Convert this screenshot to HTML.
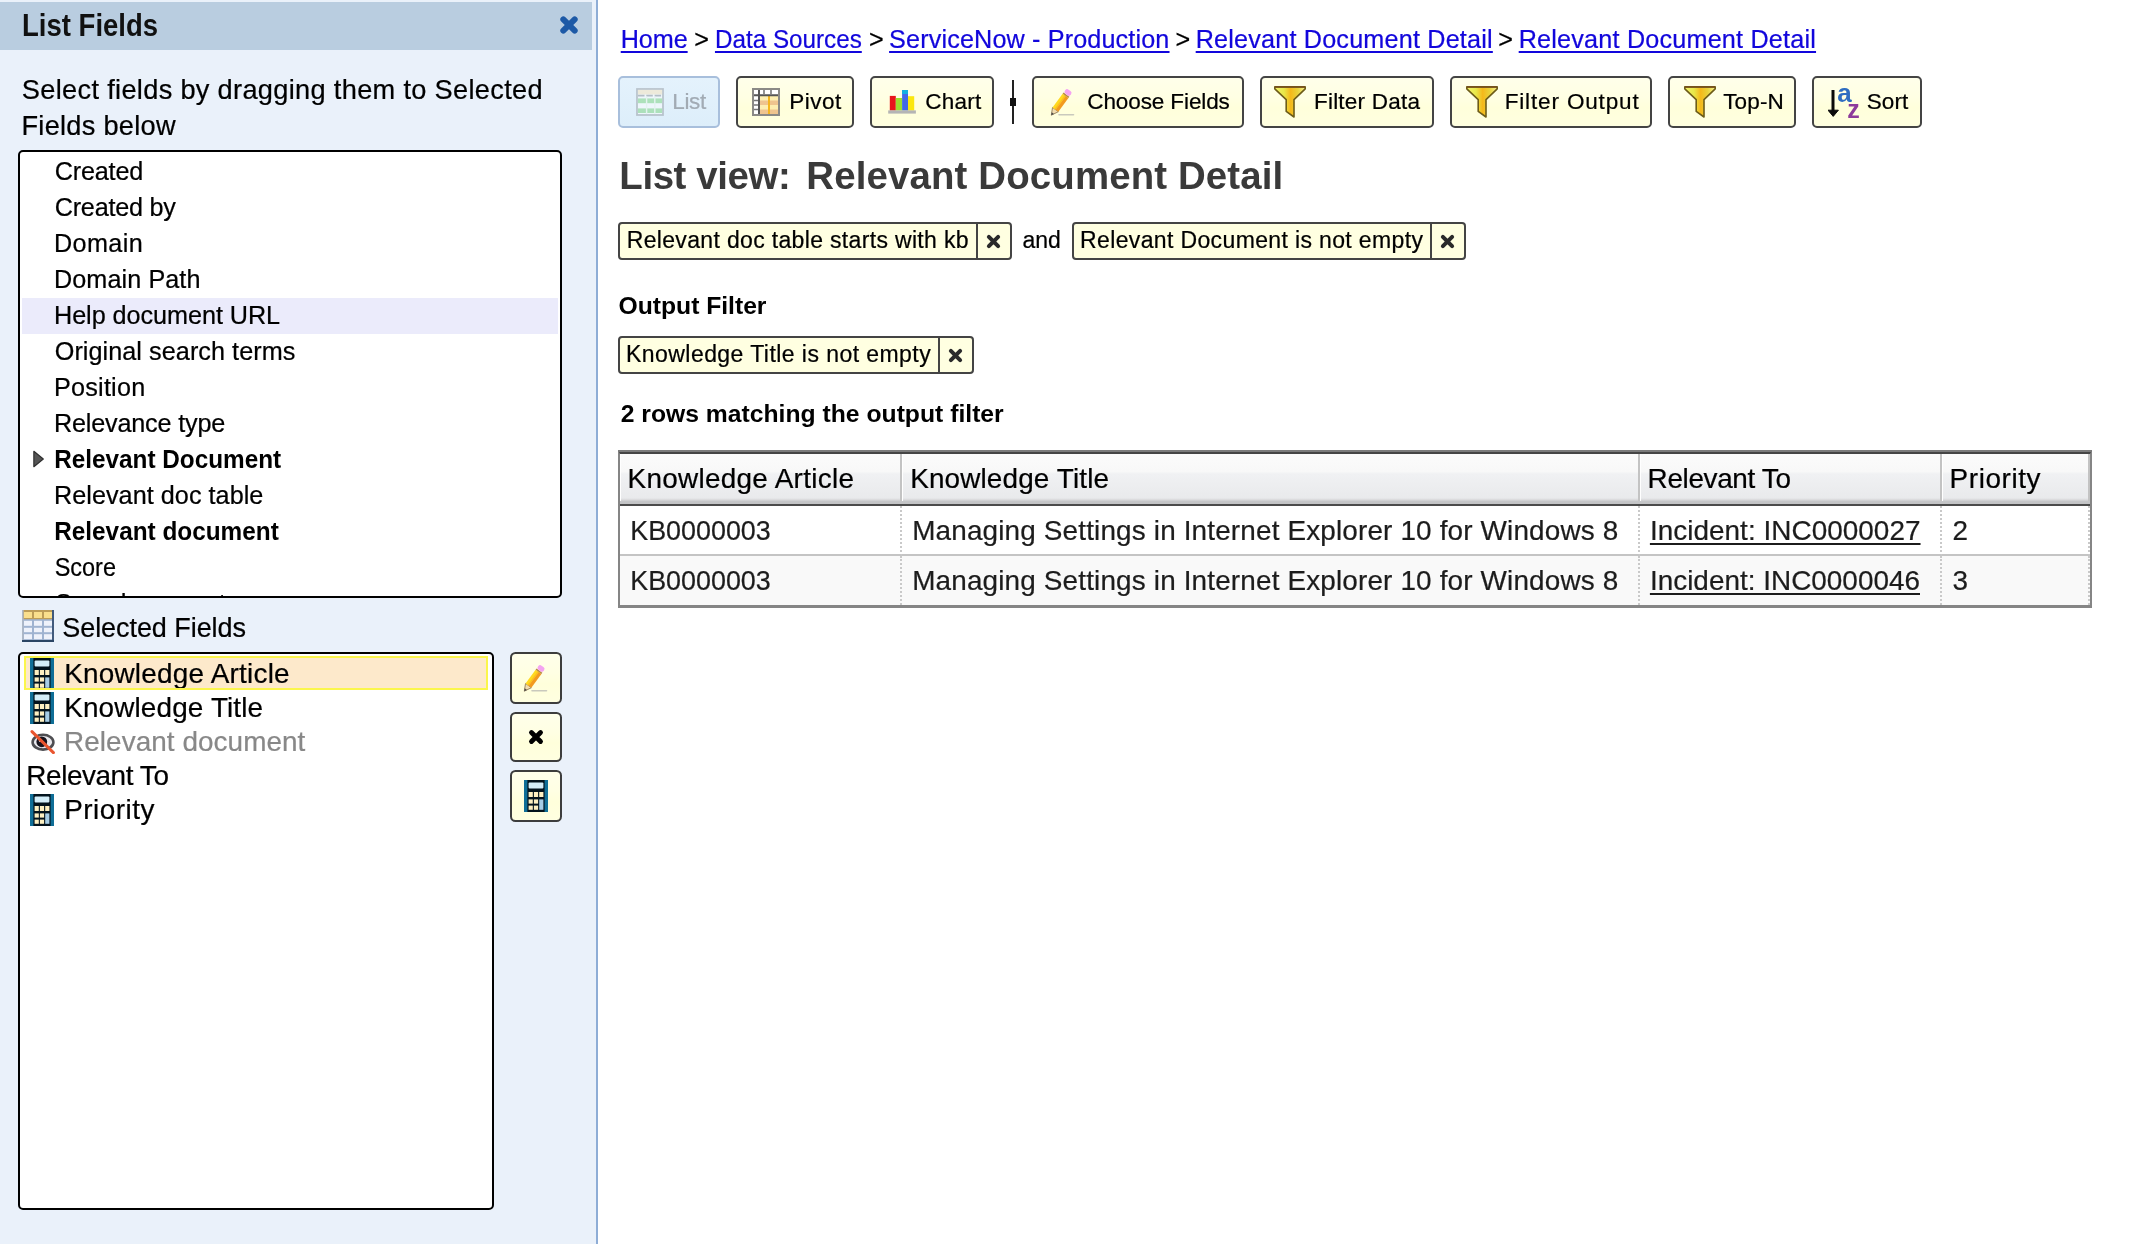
<!DOCTYPE html>
<html lang="en">
<head>
<meta charset="utf-8">
<title>List view: Relevant Document Detail</title>
<style>
html,body{margin:0;padding:0;}
body{width:2148px;height:1244px;overflow:hidden;background:#fff;position:relative;
  font-family:"Liberation Sans","DejaVu Sans",sans-serif;color:#000;font-size:25.2px;-webkit-text-stroke:0.22px;}
b,.b{font-family:"Liberation Sans","DejaVu Sans",sans-serif;font-weight:bold;-webkit-text-stroke:0;}
.abs{position:absolute;white-space:nowrap;}
/* ---------- left panel ---------- */
#left{will-change:transform;position:absolute;left:0;top:0;width:596px;height:1244px;background:#eaf1fa;border-right:2px solid #8eadd6;}
#lhead{position:absolute;left:0;top:2px;width:592px;height:48px;background:#b9cde0;}
#lhead h2{position:absolute;left:23px;top:-1px;margin:0;line-height:48px;font-size:31.8px;color:#111;white-space:nowrap;}
#lhead svg{position:absolute;left:559px;top:13px;}
#hint{position:absolute;left:22px;top:72px;width:570px;margin:0;line-height:36px;font-size:27.2px;white-space:nowrap;}
#avail{position:absolute;left:18px;top:150px;width:540px;height:444px;border:2px solid #000;border-radius:5px;background:#fff;overflow:hidden;}
#avail ul{list-style:none;margin:2px;padding:0;}
#avail li{height:36px;line-height:36px;padding-left:33px;position:relative;white-space:nowrap;}
#avail li.hl{background:#ebebfb;}
#avail li span,#avail li b{position:relative;top:-1px;}
#avail li svg{position:absolute;left:11px;top:7px;width:12px;height:20px;}
#selhead{position:absolute;left:22px;top:610px;height:32px;}
#selhead svg{position:absolute;left:0;top:0;}
#selhead span{position:absolute;left:41px;top:0;line-height:36px;white-space:nowrap;font-size:27px;}
#sel{position:absolute;left:18px;top:652px;width:472px;height:554px;border:2px solid #000;border-radius:5px;background:#fff;overflow:hidden;}
#sel ul{list-style:none;margin:2px;padding:0;}
#sel li{height:34px;line-height:34px;position:relative;white-space:nowrap;font-size:27.9px;padding-left:43px;margin:0 2px;}
#sel li.noic{padding-left:5px;}
#sel li.cur{background:#fde9cb;}
#sel li.hid{color:#888;}
#sel li svg{position:absolute;left:6px;top:2px;}
#sel li.hid svg{left:5.5px;top:5.5px;}
#sel li{overflow:hidden;}
#sel li.cur:after{content:"";position:absolute;left:0;top:0;right:0;bottom:0;border:2px solid #fbf64c;}
#sel li span{position:relative;top:1.4px;}
.sbtn{position:absolute;left:510px;width:48px;border:2px solid #3d3d3d;border-radius:5.5px;background:linear-gradient(#ffffea 0,#ffffe3 40%,#ffffdb 62%,#ffffe0 100%);}
.sbtn svg{position:absolute;left:50%;top:50%;transform:translate(-50%,-50%);}
/* ---------- main ---------- */
#main{will-change:transform;position:absolute;left:598px;top:0;width:1550px;height:1244px;background:#fff;}
#crumbs{position:absolute;left:0;top:21px;line-height:36px;white-space:nowrap;}
#crumbs a,#crumbs span{position:absolute;top:0;}
#crumbs a{color:#1206dc;text-decoration:underline;text-decoration-thickness:2px;text-underline-offset:3px;}
.tb{position:absolute;top:76px;height:48px;border:2px solid #444;border-radius:5px;background:linear-gradient(#ffffea 0,#ffffe3 40%,#ffffdb 62%,#ffffe0 100%);font-size:22.5px;}
.tb svg{position:absolute;top:8px;left:14px;}
.tb span{position:absolute;top:0;line-height:48px;white-space:nowrap;}
.tb.dis{background:#e0f0fb linear-gradient(#e4f2fc,#ddeefa);border-color:#a8bfdc;color:#a2abb4;}
#sep{position:absolute;left:414px;top:80px;width:2px;height:44px;background:#222;}
#sep:after{content:"";position:absolute;left:-2px;top:18px;width:6px;height:8px;background:#111;}
h1{position:absolute;left:23px;top:150px;margin:0;font-size:38.4px;line-height:52px;color:#3a3a3a;white-space:nowrap;}
.pill{position:absolute;height:34px;border:2px solid #444;border-radius:4px;background:#ffffe1;font-size:23px;}
.pill span{position:absolute;left:7px;top:-1.5px;line-height:34px;white-space:nowrap;}
.pill i{position:absolute;right:0;top:0;width:32px;height:34px;border-left:2px solid #444;}
.pill i svg{position:absolute;left:8px;top:9.8px;}
.h3{position:absolute;font-size:24.7px;line-height:36px;white-space:nowrap;}
#grid{position:absolute;left:20px;top:450px;width:1470px;height:151px;border-style:solid;border-color:#454545 #858585 #858585 #858585;border-width:4px 2px 3px 2px;}
#grid:before{content:"";position:absolute;left:-2px;right:-2px;top:-4px;height:2px;background:#7b7b7b;}
#grid table{border-collapse:separate;border-spacing:0;table-layout:fixed;width:1470px;font-size:27.9px;color:#1c1c1c;}
#grid th,#grid td{padding:0;text-align:left;font-weight:normal;white-space:nowrap;overflow:hidden;box-sizing:border-box;}
#grid th{height:52px;color:#000;border-bottom:2px solid #4b4b4b;background:linear-gradient(#c3c3c3,#c3c3c3) right top/2px 47px no-repeat,linear-gradient(#fff,#fff) left top/1px 47px no-repeat,linear-gradient(#fbfbfb 0,#f8f8f8 35%,#f0f1f3 40%,#e9eaec 88%,#dcdcde 91%,#c5c6c8 95%,#c2c3c5 100%);}

#grid th span{position:relative;top:0px;left:8.6px;}
#grid td{height:50px;border-right:2px dotted #c9c9c9;border-bottom:2px solid #c4c4c4;background:#fff;}
#grid tr.alt td{height:49px;border-bottom:0;background:#f9f9f9;}
#grid td span,#grid td a{position:relative;left:11.4px;top:0.5px;}
#grid td a{color:#1c1c1c;text-decoration:underline;text-decoration-thickness:2px;text-underline-offset:3px;}
</style>
<style id="fit">
#t1{display:inline-block;transform:translateX(-0.99px) scaleX(0.8655);transform-origin:0 50%;}
#t2{letter-spacing:0.316px;margin-left:-0.17px;}
#t3{letter-spacing:0.269px;margin-left:-0.56px;}
#a1{letter-spacing:-0.190px;margin-left:-0.24px;}
#a2{letter-spacing:-0.241px;margin-left:-0.24px;}
#a3{letter-spacing:0.374px;margin-left:-1.02px;}
#a4{letter-spacing:0.087px;margin-left:-1.02px;}
#a5{letter-spacing:-0.043px;margin-left:-1.01px;}
#a6{letter-spacing:0.061px;margin-left:-0.26px;}
#a7{letter-spacing:0.224px;margin-left:-1.02px;}
#a8{letter-spacing:-0.183px;margin-left:-1.02px;}
#a9{display:inline-block;transform:translateX(-0.87px) scaleX(0.9657);transform-origin:0 50%;}
#a10{letter-spacing:0.044px;margin-left:-1.02px;}
#a11{display:inline-block;transform:translateX(-0.87px) scaleX(0.9671);transform-origin:0 50%;}
#a12{display:inline-block;transform:translateX(-0.33px) scaleX(0.9315);transform-origin:0 50%;}
#t4{letter-spacing:-0.061px;margin-left:-0.78px;}
#s1{letter-spacing:0.233px;margin-left:-2.85px;}
#s2{letter-spacing:0.147px;margin-left:-2.85px;}
#s3{letter-spacing:0.062px;margin-left:-2.95px;}
#s4{letter-spacing:-0.418px;margin-left:-2.69px;}
#s5{letter-spacing:0.514px;margin-left:-2.85px;}
#c1{letter-spacing:-0.068px;margin-left:-0.29px;}
#c2{display:inline-block;transform:translateX(-1.05px) scaleX(0.9622);transform-origin:0 50%;}
#c3{letter-spacing:0.141px;margin-left:-0.51px;}
#c4{letter-spacing:0.189px;margin-left:-0.32px;}
#c5{letter-spacing:0.198px;margin-left:-0.32px;}
#q1{letter-spacing:0.000px;margin-left:-0.70px;}
#q2{letter-spacing:0.000px;margin-left:-1.11px;}
#q3{letter-spacing:0.000px;margin-left:-0.50px;}
#q4{letter-spacing:0.000px;margin-left:-0.73px;}
#b1{letter-spacing:-0.368px;margin-left:-0.68px;}
#b2{letter-spacing:0.496px;margin-left:-0.78px;}
#b3{letter-spacing:0.210px;margin-left:0.30px;}
#b4{letter-spacing:-0.106px;margin-left:0.30px;}
#b5{letter-spacing:0.229px;margin-left:-0.07px;}
#b6{letter-spacing:0.857px;margin-left:-0.37px;}
#b7{letter-spacing:0.159px;margin-left:1.20px;}
#b8{letter-spacing:0.042px;margin-left:-0.23px;}
#h1a{letter-spacing:-0.398px;margin-left:-1.66px;}
#h1b{letter-spacing:0.144px;margin-left:-1.66px;}
#p1{letter-spacing:0.336px;margin-left:-0.30px;}
#p2{letter-spacing:0.058px;margin-left:0.42px;}
#p3{letter-spacing:0.360px;margin-left:-0.92px;}
#p4{letter-spacing:0.439px;margin-left:-0.95px;}
#t5{letter-spacing:-0.022px;margin-left:0.62px;}
#t6{letter-spacing:0.011px;margin-left:0.69px;}
#g1{letter-spacing:0.291px;margin-left:-1.07px;}
#g2{letter-spacing:0.144px;margin-left:-0.46px;}
#g3{letter-spacing:-0.343px;margin-left:-0.99px;}
#g4{letter-spacing:0.580px;margin-left:-0.99px;}
#r1a{display:inline-block;transform:translateX(-0.75px) scaleX(0.9638);transform-origin:0 50%;}
#r1b{letter-spacing:0.156px;margin-left:-1.19px;}
#r1c{letter-spacing:0.042px;margin-left:-1.50px;}
#r1d{letter-spacing:0.000px;margin-left:-1.01px;}
#r2a{display:inline-block;transform:translateX(-0.75px) scaleX(0.9637);transform-origin:0 50%;}
#r2b{letter-spacing:0.156px;margin-left:-1.19px;}
#r2c{letter-spacing:0.015px;margin-left:-1.50px;}
#r2d{letter-spacing:0.000px;margin-left:-0.99px;}
</style>
</head>
<body>
<div id="left">
  <div id="lhead"><svg width="20" height="20" viewBox="0 0 20 20"><path d="M4.32 4.32L15.68 15.68M15.68 4.32L4.32 15.68" stroke="#1d59a6" stroke-width="6" stroke-linecap="round" fill="none"/></svg><h2 class="b"><span id="t1">List Fields</span></h2></div>
  <p id="hint"><span id="t2">Select fields by dragging them to Selected</span><br><span id="t3">Fields below</span></p>
  <div id="avail"><ul>
    <li><span id="a1">Created</span></li>
    <li><span id="a2">Created by</span></li>
    <li><span id="a3">Domain</span></li>
    <li><span id="a4">Domain Path</span></li>
    <li class="hl"><span id="a5">Help document URL</span></li>
    <li><span id="a6">Original search terms</span></li>
    <li><span id="a7">Position</span></li>
    <li><span id="a8">Relevance type</span></li>
    <li><svg width="14" height="20" viewBox="0 0 14 20"><path d="M1 1L12 10L1 19Z" fill="#555" stroke="#2e2e2e" stroke-width="1.4" stroke-linejoin="round"/></svg><b id="a9">Relevant Document</b></li>
    <li><span id="a10">Relevant doc table</span></li>
    <li><b id="a11">Relevant document</b></li>
    <li><span id="a12">Score</span></li>
    <li><span id="a13">Search request</span></li>
  </ul></div>
  <div id="selhead"><svg width="32" height="32" viewBox="0 0 16 16"><rect width="16" height="16" fill="#9fb3d1"/><rect width="16" height="4.6" fill="#bd9d58"/><g fill="#fadf8c"><rect x="1" y="1" width="4" height="3"/><rect x="6" y="1" width="4" height="3"/><rect x="11" y="1" width="4" height="3"/></g><g fill="#eef2fb"><rect x="1" y="5.4" width="4" height="2.5"/><rect x="6" y="5.4" width="4" height="2.5"/><rect x="11" y="5.4" width="4" height="2.5"/><rect x="1" y="8.9" width="4" height="2.2"/><rect x="6" y="8.9" width="4" height="2.2"/><rect x="11" y="8.9" width="4" height="2.2"/><rect x="1" y="12.1" width="4" height="2.5"/><rect x="6" y="12.1" width="4" height="2.5"/><rect x="11" y="12.1" width="4" height="2.5"/></g><rect x="0" width="0.8" height="16" fill="#aeb8c6"/><rect x="15" width="1" height="16" fill="#415a7c"/><rect y="15" width="16" height="1" fill="#2b4564"/></svg><span id="t4">Selected Fields</span></div>
  <div id="sel"><ul>
    <li class="cur"><svg width="24" height="32" viewBox="0 0 24 32"><rect width="24" height="32" fill="#0f6e97"/><rect x="3.4" width="17.2" height="32" fill="#03131d"/><rect x="4.6" y="2.4" width="14.8" height="6" rx="1" fill="#d4eef9"/><g fill="#fdf0c2"><rect x="4.6" y="12" width="4.2" height="5"/><rect x="9.9" y="12" width="4.2" height="5"/><rect x="15.2" y="12" width="4.2" height="5"/><rect x="4.6" y="19.4" width="4.2" height="4.2"/><rect x="9.9" y="19.4" width="4.2" height="4.2"/><rect x="4.6" y="25.6" width="4.2" height="4.2"/><rect x="9.9" y="25.6" width="4.2" height="4.2"/></g><rect x="15.2" y="19.4" width="4.2" height="10.4" fill="#a6cde6"/></svg><span id="s1">Knowledge Article</span></li>
    <li><svg width="24" height="32" viewBox="0 0 24 32"><rect width="24" height="32" fill="#0f6e97"/><rect x="3.4" width="17.2" height="32" fill="#03131d"/><rect x="4.6" y="2.4" width="14.8" height="6" rx="1" fill="#d4eef9"/><g fill="#fdf0c2"><rect x="4.6" y="12" width="4.2" height="5"/><rect x="9.9" y="12" width="4.2" height="5"/><rect x="15.2" y="12" width="4.2" height="5"/><rect x="4.6" y="19.4" width="4.2" height="4.2"/><rect x="9.9" y="19.4" width="4.2" height="4.2"/><rect x="4.6" y="25.6" width="4.2" height="4.2"/><rect x="9.9" y="25.6" width="4.2" height="4.2"/></g><rect x="15.2" y="19.4" width="4.2" height="10.4" fill="#a6cde6"/></svg><span id="s2">Knowledge Title</span></li>
    <li class="hid"><svg width="26" height="24" viewBox="0 0 26 24"><ellipse cx="13" cy="12.2" rx="10.4" ry="7.4" fill="#e9e9ee" stroke="#4e4e52" stroke-width="2.6"/><circle cx="11.8" cy="11.8" r="5.4" fill="#17131d"/><circle cx="10.4" cy="10.6" r="1.5" fill="#fff"/><path d="M2 1.6L23.4 22.6" stroke="#e9552f" stroke-width="3" stroke-linecap="round"/></svg><span id="s3">Relevant document</span></li>
    <li class="noic"><span id="s4">Relevant To</span></li>
    <li><svg width="24" height="32" viewBox="0 0 24 32"><rect width="24" height="32" fill="#0f6e97"/><rect x="3.4" width="17.2" height="32" fill="#03131d"/><rect x="4.6" y="2.4" width="14.8" height="6" rx="1" fill="#d4eef9"/><g fill="#fdf0c2"><rect x="4.6" y="12" width="4.2" height="5"/><rect x="9.9" y="12" width="4.2" height="5"/><rect x="15.2" y="12" width="4.2" height="5"/><rect x="4.6" y="19.4" width="4.2" height="4.2"/><rect x="9.9" y="19.4" width="4.2" height="4.2"/><rect x="4.6" y="25.6" width="4.2" height="4.2"/><rect x="9.9" y="25.6" width="4.2" height="4.2"/></g><rect x="15.2" y="19.4" width="4.2" height="10.4" fill="#a6cde6"/></svg><span id="s5">Priority</span></li>
  </ul></div>
  <div class="sbtn" style="top:652px;height:48px"><svg width="32" height="32" viewBox="0 0 32 32"><path d="M12 28.8H26.5" stroke="#c9c9bd" stroke-width="1.6" stroke-linecap="round"/><g transform="translate(4.3 29.2) rotate(-53.7)"><path d="M0 0L7 -3.6V3.6Z" fill="#f2dcae" stroke="#8f7a58" stroke-width=".8"/><path d="M0 0L2.6 -1.35V1.35Z" fill="#4a4a4a"/><rect x="7" y="-3.6" width="17" height="3.6" fill="#ffd91f"/><rect x="7" y="0" width="17" height="3.6" fill="#f29a1f"/><rect x="7" y="-1.1" width="17" height="1.6" fill="#fbbf1f"/><rect x="24" y="-3.6" width="1.6" height="7.2" fill="#b78a45"/><rect x="25.6" y="-3.6" width="5.2" height="7.2" rx="2.4" fill="#f4a4f1"/></g></svg></div>
  <div class="sbtn" style="top:712px;height:46px"><svg width="16" height="16" viewBox="0 0 16 16"><path d="M3.456 3.456L12.544 12.544M12.544 3.456L3.456 12.544" stroke="#000" stroke-width="4.8" stroke-linecap="round" fill="none"/></svg></div>
  <div class="sbtn" style="top:770px;height:48px"><svg width="24" height="32" viewBox="0 0 24 32"><rect width="24" height="32" fill="#0f6e97"/><rect x="3.4" width="17.2" height="32" fill="#03131d"/><rect x="4.6" y="2.4" width="14.8" height="6" rx="1" fill="#d4eef9"/><g fill="#fdf0c2"><rect x="4.6" y="12" width="4.2" height="5"/><rect x="9.9" y="12" width="4.2" height="5"/><rect x="15.2" y="12" width="4.2" height="5"/><rect x="4.6" y="19.4" width="4.2" height="4.2"/><rect x="9.9" y="19.4" width="4.2" height="4.2"/><rect x="4.6" y="25.6" width="4.2" height="4.2"/><rect x="9.9" y="25.6" width="4.2" height="4.2"/></g><rect x="15.2" y="19.4" width="4.2" height="10.4" fill="#a6cde6"/></svg></div>
</div>
<div id="main">
  <div id="crumbs"><a id="c1" style="left:23px">Home</a><span id="q1" style="left:97px">&gt;</span><a id="c2" style="left:118px">Data Sources</a><span id="q2" style="left:272px">&gt;</span><a id="c3" style="left:291.6px">ServiceNow - Production</a><span id="q3" style="left:578px">&gt;</span><a id="c4" style="left:598px">Relevant Document Detail</a><span id="q4" style="left:901px">&gt;</span><a id="c5" style="left:921px">Relevant Document Detail</a></div>
  <div class="tb dis" style="left:20px;width:98px"><svg width="32" height="32" viewBox="0 0 32 32" opacity=".45"><rect x="3" y="3" width="26" height="26" fill="#fff" stroke="#8a8f96" stroke-width="1.8"/><rect x="3.9" y="3.9" width="24.2" height="4.6" fill="#fbe3b4"/><path d="M4 9.6H28" stroke="#7d8288" stroke-width="1.8" stroke-dasharray="6.5 1.8"/><rect x="3.9" y="12.4" width="24.2" height="4.8" fill="#6fd06f"/><rect x="3.9" y="22.4" width="24.2" height="4.6" fill="#6fd06f"/><path d="M12.6 10.6V28M20.8 10.6V28" stroke="#e9f8e6" stroke-width="1.4"/></svg><span id="b1" style="left:53px">List</span></div>
  <div class="tb" style="left:138px;width:114px"><svg style="left:12px" width="32" height="32" viewBox="0 0 32 32"><rect x="2" y="2" width="28" height="28" fill="#8b8a86"/><rect x="4" y="4" width="24" height="24" fill="#fff"/><rect x="10" y="10" width="18" height="18" fill="#fdeeb0"/><rect x="10" y="14.5" width="18" height="4.5" fill="#efc48e"/><rect x="10" y="23.5" width="18" height="4.5" fill="#efc48e"/><path d="M19 10V28" stroke="#f5b61e" stroke-width="2"/><path d="M9 4V28M4 9.2H28" stroke="#555" stroke-width="2"/><path d="M4 14.5H8M4 19H8M4 23.5H8M14 4V8M21 4V8" stroke="#777" stroke-width="1.6"/></svg><span id="b2" style="left:52px">Pivot</span></div>
  <div class="tb" style="left:272px;width:120px"><svg style="left:12px" width="32" height="32" viewBox="0 0 32 32"><rect x="5.8" y="9.9" width="6" height="14.6" fill="#e8151b"/><rect x="11.8" y="12" width="6.3" height="12.5" fill="#9bdf2f"/><rect x="18.1" y="4" width="5.9" height="20.5" fill="#4169e8"/><rect x="18.1" y="4" width="5.9" height="4" fill="#12b0e2"/><rect x="24" y="10.2" width="6.2" height="14.3" fill="#fbe70f"/><rect x="4.2" y="24.4" width="27.7" height="3.2" fill="#b5b5b5"/></svg><span id="b3" style="left:53px">Chart</span></div>
  <div id="sep"></div>
  <div class="tb" style="left:434px;width:208px"><svg style="left:13.3px" width="32" height="32" viewBox="0 0 32 32"><path d="M12 28.8H26.5" stroke="#c9c9bd" stroke-width="1.6" stroke-linecap="round"/><g transform="translate(4.3 29.2) rotate(-53.7)"><path d="M0 0L7 -3.6V3.6Z" fill="#f2dcae" stroke="#8f7a58" stroke-width=".8"/><path d="M0 0L2.6 -1.35V1.35Z" fill="#4a4a4a"/><rect x="7" y="-3.6" width="17" height="3.6" fill="#ffd91f"/><rect x="7" y="0" width="17" height="3.6" fill="#f29a1f"/><rect x="7" y="-1.1" width="17" height="1.6" fill="#fbbf1f"/><rect x="24" y="-3.6" width="1.6" height="7.2" fill="#b78a45"/><rect x="25.6" y="-3.6" width="5.2" height="7.2" rx="2.4" fill="#f4a4f1"/></g></svg><span id="b4" style="left:53px">Choose Fields</span></div>
  <div class="tb" style="left:662px;width:170px"><svg style="left:12px" width="32" height="32" viewBox="0 0 32 32"><defs><linearGradient id="fg" x1="0" x2="1" y1="0" y2="0"><stop offset="0" stop-color="#f3f36a"/><stop offset=".3" stop-color="#e8e84a"/><stop offset=".52" stop-color="#f5b81a"/><stop offset=".75" stop-color="#e8d23a"/><stop offset="1" stop-color="#f7f08a"/></linearGradient></defs><path d="M.8 .9H31.2V2.8L20 13.6V31L12.2 25.4V13.6L.8 2.8Z" fill="url(#fg)" stroke="#6d5c18" stroke-width="1.6" stroke-linejoin="round"/><path d="M1 1H31" stroke="#7a4f1c" stroke-width="1.5"/></svg><span id="b5" style="left:52px">Filter Data</span></div>
  <div class="tb" style="left:852px;width:198px"><svg width="32" height="32" viewBox="0 0 32 32"><defs><linearGradient id="fg2" x1="0" x2="1" y1="0" y2="0"><stop offset="0" stop-color="#f3f36a"/><stop offset=".3" stop-color="#e8e84a"/><stop offset=".52" stop-color="#f5b81a"/><stop offset=".75" stop-color="#e8d23a"/><stop offset="1" stop-color="#f7f08a"/></linearGradient></defs><path d="M.8 .9H31.2V2.8L20 13.6V31L12.2 25.4V13.6L.8 2.8Z" fill="url(#fg2)" stroke="#6d5c18" stroke-width="1.6" stroke-linejoin="round"/><path d="M1 1H31" stroke="#7a4f1c" stroke-width="1.5"/></svg><span id="b6" style="left:53px">Filter Output</span></div>
  <div class="tb" style="left:1070px;width:124px"><svg width="32" height="32" viewBox="0 0 32 32"><defs><linearGradient id="fg3" x1="0" x2="1" y1="0" y2="0"><stop offset="0" stop-color="#f3f36a"/><stop offset=".3" stop-color="#e8e84a"/><stop offset=".52" stop-color="#f5b81a"/><stop offset=".75" stop-color="#e8d23a"/><stop offset="1" stop-color="#f7f08a"/></linearGradient></defs><path d="M.8 .9H31.2V2.8L20 13.6V31L12.2 25.4V13.6L.8 2.8Z" fill="url(#fg3)" stroke="#6d5c18" stroke-width="1.6" stroke-linejoin="round"/><path d="M1 1H31" stroke="#7a4f1c" stroke-width="1.5"/></svg><span id="b7" style="left:52px">Top-N</span></div>
  <div class="tb" style="left:1214px;width:106px"><svg width="34" height="34" viewBox="0 0 34 34"><path d="M5 4V26" stroke="#0a0a0a" stroke-width="3"/><path d="M0 24.2H10.4L5.2 30.4Z" fill="#0a0a0a" stroke="#0a0a0a" stroke-width="1" stroke-linejoin="round"/><text x="9.3" y="15.6" font-family="Liberation Sans,sans-serif" font-weight="bold" font-size="26" fill="#2f6dc1">a</text><text x="19.2" y="31.8" font-family="Liberation Sans,sans-serif" font-weight="bold" font-size="25" fill="#8d3b9b">z</text></svg><span id="b8" style="left:53px">Sort</span></div>
  <h1 class="b"><span id="h1a">List view:</span> <span id="h1b" style="position:absolute;left:187px">Relevant Document Detail</span></h1>
  <div class="pill" style="left:20px;top:222px;width:390px"><span id="p1">Relevant doc table starts with kb</span><i><svg width="15" height="15" viewBox="0 0 15 15"><path d="M2.88 2.88L12.120000000000001 12.120000000000001M12.120000000000001 2.88L2.88 12.120000000000001" stroke="#2a2a2a" stroke-width="4.0" stroke-linecap="round" fill="none"/></svg></i></div>
  <div class="abs" id="p2" style="left:424px;top:222.5px;line-height:34px;font-size:23px">and</div>
  <div class="pill" style="left:474px;top:222px;width:390px"><span id="p3">Relevant Document is not empty</span><i><svg width="15" height="15" viewBox="0 0 15 15"><path d="M2.88 2.88L12.120000000000001 12.120000000000001M12.120000000000001 2.88L2.88 12.120000000000001" stroke="#2a2a2a" stroke-width="4.0" stroke-linecap="round" fill="none"/></svg></i></div>
  <div class="h3 b" id="t5" style="left:20px;top:288px">Output Filter</div>
  <div class="pill" style="left:20px;top:336px;width:352px"><span id="p4">Knowledge Title is not empty</span><i><svg width="15" height="15" viewBox="0 0 15 15"><path d="M2.88 2.88L12.120000000000001 12.120000000000001M12.120000000000001 2.88L2.88 12.120000000000001" stroke="#2a2a2a" stroke-width="4.0" stroke-linecap="round" fill="none"/></svg></i></div>
  <div class="h3 b" id="t6" style="left:22px;top:396px">2 rows matching the output filter</div>
  <div id="grid"><table>
    <colgroup><col style="width:282px"><col style="width:738px"><col style="width:302px"><col style="width:148px"></colgroup>
    <thead><tr><th><span id="g1">Knowledge Article</span></th><th><span id="g2">Knowledge Title</span></th><th><span id="g3">Relevant To</span></th><th><span id="g4">Priority</span></th></tr></thead>
    <tbody>
    <tr><td><span id="r1a">KB0000003</span></td><td><span id="r1b">Managing Settings in Internet Explorer 10 for Windows 8</span></td><td><a id="r1c">Incident: INC0000027</a></td><td><span id="r1d">2</span></td></tr>
    <tr class="alt"><td><span id="r2a">KB0000003</span></td><td><span id="r2b">Managing Settings in Internet Explorer 10 for Windows 8</span></td><td><a id="r2c">Incident: INC0000046</a></td><td><span id="r2d">3</span></td></tr>
    </tbody></table></div>
</div>
</body>
</html>
